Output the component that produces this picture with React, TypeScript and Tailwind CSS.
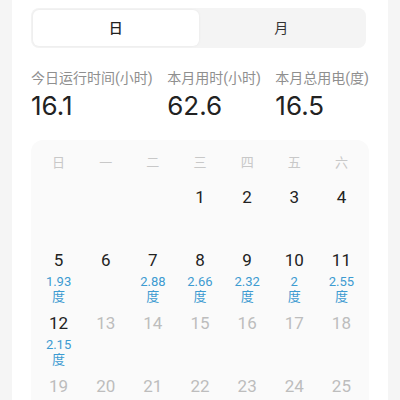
import { useState } from 'react';

const weekDays = ['日', '一', '二', '三', '四', '五', '六'];

// kWh per day, only filled for days that have a reading
const usage: Record<number, string> = {
  5: '1.93',
  7: '2.88',
  8: '2.66',
  9: '2.32',
  10: '2',
  11: '2.55',
  12: '2.15',
};

const today = 12;
const firstWeekday = 3;
const daysInMonth = 31;

export default function App() {
  const [tab, setTab] = useState<'day' | 'month'>('day');

  const cells: (number | null)[] = [];
  for (let i = 0; i < firstWeekday; i++) cells.push(null);
  for (let d = 1; d <= daysInMonth; d++) cells.push(d);
  while (cells.length % 7 !== 0) cells.push(null);

  return (
    <div
      className="min-h-[400px] w-[400px] bg-[#f5f5f5] px-3 overflow-hidden"
      style={{ fontFamily: 'Roboto, "Noto Sans CJK SC", sans-serif' }}
    >
      <div className="bg-white px-[19px] pt-2 pb-6">
        {/* Segmented control */}
        <div className="flex h-10 w-[335px] rounded-lg bg-[#f4f4f4] p-[2px]">
          <button
            onClick={() => setTab('day')}
            className={`flex-1 rounded-md text-[14px] ${
              tab === 'day'
                ? 'bg-white font-medium text-[#222] shadow-[0_0_3px_rgba(0,0,0,0.06)]'
                : 'text-[#333]'
            }`}
          >
            日
          </button>
          <button
            onClick={() => setTab('month')}
            className={`flex-1 rounded-md text-[14px] ${
              tab === 'month'
                ? 'bg-white font-medium text-[#222] shadow-[0_0_3px_rgba(0,0,0,0.06)]'
                : 'text-[#333]'
            }`}
          >
            月
          </button>
        </div>

        {/* Stats */}
        <div className="mt-5 flex justify-between">
          <div>
            <div className="text-[14px] leading-5 text-[#8f8f8f]">今日运行时间(小时)</div>
            <div className="mt-[2px] font-['Inter',sans-serif] text-[26px] leading-8 text-[#222]">16.1</div>
          </div>
          <div>
            <div className="text-[14px] leading-5 text-[#8f8f8f]">本月用时(小时)</div>
            <div className="mt-[2px] font-['Inter',sans-serif] text-[26px] leading-8 text-[#222]">62.6</div>
          </div>
          <div>
            <div className="text-[14px] leading-5 text-[#8f8f8f]">本月总用电(度)</div>
            <div className="mt-[2px] font-['Inter',sans-serif] text-[26px] leading-8 text-[#222]">16.5</div>
          </div>
        </div>

        {/* Calendar */}
        <div className="mt-[18px] rounded-xl bg-[#fafafa] px-1 pt-3">
          <div className="grid h-[25px] grid-cols-7">
            {weekDays.map((w) => (
              <div key={w} className="text-center text-[13px] leading-[22px] text-[#c8c8c8]">
                {w}
              </div>
            ))}
          </div>
          <div className="grid grid-cols-7">
            {cells.map((d, i) => (
              <div key={i} className="flex h-[63px] flex-col items-center pt-[9px]">
                {d !== null && (
                  <>
                    <div
                      className={`text-[17px] leading-[22px] ${
                        d <= today ? 'text-[#222]' : 'text-[#bdbdbd]'
                      }`}
                    >
                      {d}
                    </div>
                    {usage[d] && (
                      <div className="mt-[3px] text-center text-[13px] leading-[15px] text-[#3d9bd1]">
                        <div>{usage[d]}</div>
                        <div>度</div>
                      </div>
                    )}
                  </>
                )}
              </div>
            ))}
          </div>
        </div>
      </div>
    </div>
  );
}
